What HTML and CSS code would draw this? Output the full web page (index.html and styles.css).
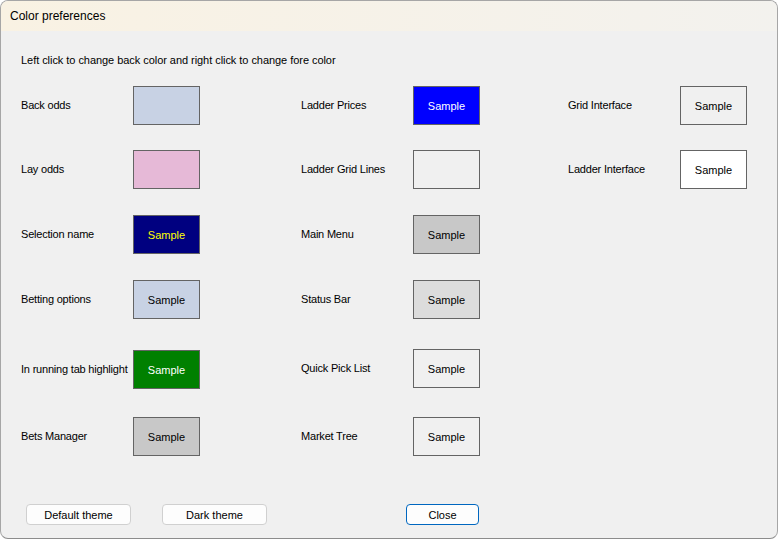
FILE: index.html
```html
<!DOCTYPE html>
<html lang="en">
<head>
    <meta charset="UTF-8">
    <title>Color preferences</title>
    <link rel="stylesheet" href="styles.css">
</head>
<body>
    <div class="window">
        <div class="titlebar">Color preferences</div>
        <div class="content">
            <p class="hint">Left click to change back color and right click to change fore color</p>
            <div class="grid">
                <!-- row 1 -->
                <div class="item"><span class="label">Back odds</span><div class="swatch back"></div></div>
                <div class="item"><span class="label">Ladder Prices</span><div class="swatch blue">Sample</div></div>
                <div class="item"><span class="label">Grid Interface</span><div class="swatch plain">Sample</div></div>
                <!-- row 2 -->
                <div class="item"><span class="label">Lay odds</span><div class="swatch lay"></div></div>
                <div class="item"><span class="label">Ladder Grid Lines</span><div class="swatch plain"></div></div>
                <div class="item"><span class="label">Ladder Interface</span><div class="swatch white">Sample</div></div>
                <!-- row 3 -->
                <div class="item"><span class="label">Selection name</span><div class="swatch navy">Sample</div></div>
                <div class="item"><span class="label">Main Menu</span><div class="swatch grey">Sample</div></div>
                <div></div>
                <!-- row 4 -->
                <div class="item"><span class="label">Betting options</span><div class="swatch back">Sample</div></div>
                <div class="item"><span class="label">Status Bar</span><div class="swatch light">Sample</div></div>
                <div></div>
                <!-- row 5 -->
                <div class="item"><span class="label">In running tab highlight</span><div class="swatch green">Sample</div></div>
                <div class="item up"><span class="label">Quick Pick List</span><div class="swatch plain">Sample</div></div>
                <div></div>
                <!-- row 6 -->
                <div class="item"><span class="label">Bets Manager</span><div class="swatch grey">Sample</div></div>
                <div class="item"><span class="label">Market Tree</span><div class="swatch plain">Sample</div></div>
                <div></div>
            </div>
            <div class="buttons">
                <button>Default theme</button>
                <button>Dark theme</button>
                <button class="close">Close</button>
            </div>
        </div>
    </div>
</body>
</html>
```

FILE: styles.css
```css
body {
    margin: 0;
    font-family: "Liberation Sans", Arial, sans-serif;
    font-size: 11px;
    color: #000;
    background: #fff;
}
.window {
    width: 778px;
    height: 539px;
    box-sizing: border-box;
    border: 1px solid #a6a6a6;
    border-bottom-color: #8c8c8c;
    border-radius: 8px;
    overflow: hidden;
    background-color: #f0f0f0;
}
.titlebar {
    height: 30px;
    line-height: 30px;
    padding-left: 9px;
    font-size: 12px;
    background: linear-gradient(to right, #f9f2e3, #f3f2ee);
}
.content {
    padding: 0 0 0 20px;
}
.hint {
    margin: 0;
    padding-top: 22px;
    height: 33px;
    line-height: 14px;
    letter-spacing: -0.05px;
}
.grid {
    display: grid;
    grid-template-columns: 280px 267px 1fr;
    grid-template-rows: 64px 65px 65px 70px 67px 39px;
}
.item {
    display: flex;
    align-items: center;
    height: 39px;
}
.item.up {
    margin-top: -1px;
}
.label {
    width: 112px;
    margin-top: -2px;
    letter-spacing: -0.2px;
}
.swatch {
    width: 65px;
    height: 37px;
    border: 1px solid #646464;
    display: flex;
    align-items: center;
    justify-content: center;
}
.back { background-color: #c8d2e4; }
.lay { background-color: #e6b9d7; }
.navy { background-color: #000080; color: #ffff00; }
.blue { background-color: #0000ff; color: #fff; }
.green { background-color: #008000; color: #fff; }
.grey { background-color: #c8c8c8; }
.light { background-color: #dcdcdc; }
.plain { background-color: #f0f0f0; }
.white { background-color: #fff; }
.buttons {
    display: flex;
    gap: 31px;
    margin-top: 48px;
    padding-left: 5px;
}
button {
    width: 105px;
    height: 21px;
    padding: 0;
    font-family: inherit;
    font-size: 11px;
    background-color: #fdfdfd;
    border: 1px solid #d0d0d0;
    border-radius: 4px;
}
button.close {
    width: 73px;
    margin-left: 108px;
    border-color: #0067c0;
}
```
